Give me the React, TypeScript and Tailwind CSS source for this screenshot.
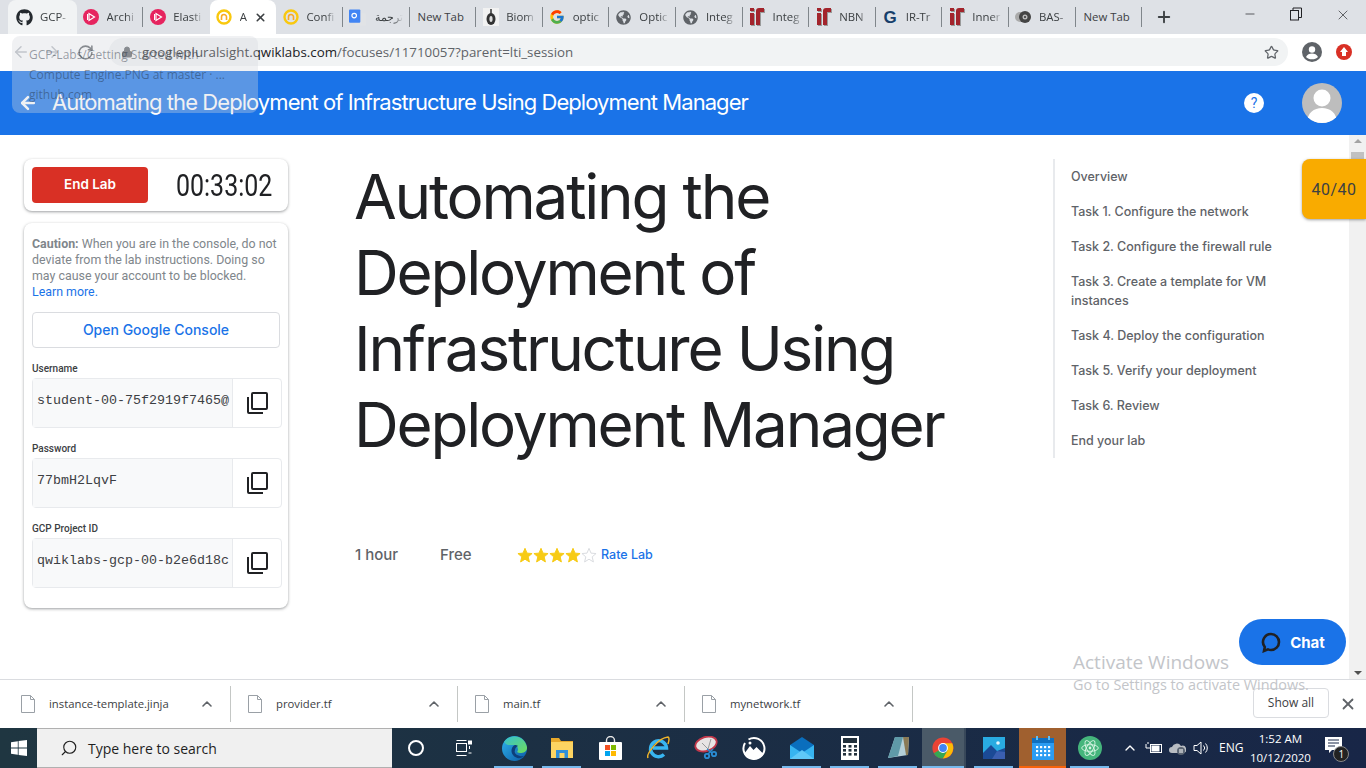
import React from "react";
import { FaGithub, FaGlobeAmericas } from "react-icons/fa";
import { FcGoogle } from "react-icons/fc";
import { ArrowLeft, ArrowRight, RotateCw, Lock, Star, X, Plus, Minus, ChevronUp, Search } from "lucide-react";

const Play = () => (
  <svg width="16" height="16" viewBox="0 0 16 16"><circle cx="8" cy="8" r="8" fill="#e6245f" /><path d="M6 4.5v7l5.5-3.5z" fill="none" stroke="#fff" strokeWidth="1.2" /><path d="M4.5 5v6" stroke="#fff" strokeWidth="1" /></svg>
);
const Qwik = () => (
  <svg width="16" height="16" viewBox="0 0 16 16"><circle cx="8" cy="8" r="6.5" fill="none" stroke="#f9c80e" strokeWidth="2.4" /><path d="M5.5 11V8a2.5 2.5 0 0 1 5 0v3" fill="none" stroke="#f9a825" strokeWidth="1.6" /></svg>
);
const Translate = () => (
  <svg width="18" height="17" viewBox="0 0 18 17"><rect x="6" y="4" width="12" height="13" rx="1" fill="#e1e3e6" /><rect x="0" y="0" width="12" height="14" rx="1" fill="#4285f4" /><circle cx="5.5" cy="6.5" r="2.4" fill="none" stroke="#fff" strokeWidth="1.2" /></svg>
);
const Iron = () => (
  <svg width="16" height="18" viewBox="0 0 16 18"><path d="M2 6h4v12H2zM2 1h4v3H2zM8 18V4a3 3 0 0 1 3-3h5v4h-4v13z" fill="#9a9a9a" /><path d="M1 5h4v12H1zM1 0h4v3H1zM7 17V3a3 3 0 0 1 3-3h5v4h-4v13z" fill="#a3242c" /></svg>
);
const Biom = () => (
  <svg width="16" height="18" viewBox="0 0 16 18"><rect width="16" height="18" fill="#f2f2f2" /><ellipse cx="8" cy="11" rx="4.5" ry="6" fill="#333" /><ellipse cx="8" cy="11" rx="1.6" ry="3" fill="#ddd" /><path d="M8 1v6" stroke="#333" strokeWidth="1.5" /></svg>
);
const Bas = () => (
  <svg width="16" height="12" viewBox="0 0 16 12"><circle cx="5" cy="6" r="5" fill="#aaa" /><circle cx="10" cy="6" r="6" fill="#444" /><circle cx="10" cy="6" r="2.5" fill="#bbb" /><circle cx="10" cy="6" r="1" fill="#333" /></svg>
);
const GTile = () => <span className="text-[17px] font-bold text-[#173f6b] leading-none" style={{ fontFamily: "Liberation Sans" }}>G</span>;
const GH = () => <FaGithub size={17} color="#24292e" />;
const Globe = () => <FaGlobeAmericas size={15} color="#5f6368" />;

const tabs: { icon?: React.ReactNode; label: string; active?: boolean; hover?: boolean; sep?: boolean; ar?: boolean }[] = [
  { icon: <GH />, label: "GCP-", hover: true },
  { icon: <Play />, label: "Archi", sep: true },
  { icon: <Play />, label: "Elasti" },
  { icon: <Qwik />, label: "A", active: true },
  { icon: <Qwik />, label: "Confi", sep: true },
  { icon: <Translate />, label: "ترجمة", sep: true, ar: true },
  { label: "New Tab", sep: true },
  { icon: <Biom />, label: "Biom", sep: true },
  { icon: <FcGoogle size={16} />, label: "optic", sep: true },
  { icon: <Globe />, label: "Optic", sep: true },
  { icon: <Globe />, label: "Integ", sep: true },
  { icon: <Iron />, label: "Integ", sep: true },
  { icon: <Iron />, label: "NBN", sep: true },
  { icon: <GTile />, label: "IR-Tr", sep: true },
  { icon: <Iron />, label: "Inner", sep: true },
  { icon: <Bas />, label: "BAS-", sep: true },
  { label: "New Tab", sep: true },
];

function Tab({ t }: { t: (typeof tabs)[number] }) {
  return (
    <div className={`relative h-[34px] flex items-center shrink-0 gap-[7px] rounded-t-lg ${t.hover ? "w-[68.6px] -ml-[2px] pl-[8px] bg-[#f1f3f4]" : t.active ? "w-[66.6px] pl-[6px] bg-white" : t.icon ? "w-[66.6px] pl-[6px]" : "w-[66.6px] pl-[8px]"}`}>
      {t.icon && <span className="w-[17px] shrink-0 flex items-center justify-center">{t.icon}</span>}
      <span className={`overflow-hidden whitespace-nowrap text-[11.4px] text-[#3c4043] ${t.icon ? "w-[30px] [mask-image:linear-gradient(to_right,black_65%,transparent)]" : ""}`} dir={t.ar ? "rtl" : undefined}>{t.label}</span>
      {t.active && <X size={13} strokeWidth={3} className="absolute right-[9px] text-[#3c4043]" />}
      {t.sep && <span className="absolute right-0 top-[7px] h-[20px] w-px bg-[#80868b]" />}
    </div>
  );
}

function CredRow({ label, value }: { label: string; value: string }) {
  return (
    <div className="flex flex-col">
      <div className="h-[20px] text-[10px] font-medium text-[#3c4043] leading-[14px] pt-[4px]" style={{ fontFamily: "Roboto" }}>{label}</div>
      <div className="flex h-[50px] w-[250px] rounded border border-[#e8eaed]">
        <div className="w-[199px] bg-[#f8f9fa] pl-[4px] pt-[14px] text-[13.33px] leading-[16px] text-[#3c4043] whitespace-nowrap overflow-hidden" style={{ fontFamily: "Liberation Mono" }}>{value}</div>
        <div className="flex-1 border-l border-[#e8eaed] flex items-center justify-center">
          <svg width="24" height="24" viewBox="0 0 24 24" fill="none" stroke="#202124" strokeWidth="2"><rect x="7" y="2" width="15" height="16" rx="1" /><path d="M3 6v15a1 1 0 0 0 1 1h14" /></svg>
        </div>
      </div>
    </div>
  );
}

const nav = ["Overview", "Task 1. Configure the network", "Task 2. Configure the firewall rule", "Task 3. Create a template for VM instances", "Task 4. Deploy the configuration", "Task 5. Verify your deployment", "Task 6. Review", "End your lab"];

const StarIcon = ({ filled }: { filled: boolean }) => (
  <svg width="16" height="16" viewBox="0 0 24 24"><path d="M12 2l3 7.2 7.6.6-5.8 5 1.8 7.6L12 18.3 5.4 22.4l1.8-7.6-5.8-5L9 9.2z" fill={filled ? "#f7cb15" : "#fff"} stroke={filled ? "#f7cb15" : "#dadce0"} strokeWidth="1.5" /></svg>
);

const FileIcon = () => (
  <svg width="14" height="18" viewBox="0 0 14 18" fill="none" stroke="#9aa0a6"><path d="M.5.5h9l4 4v13H.5z" fill="#fff" /><path d="M9.5.5v4h4" /></svg>
);

function Dl({ name, w, pl }: { name: string; w: string; pl: string }) {
  return (
    <div className={`flex items-center h-[36px] border-r border-[#c4c7c5] pr-[15px] ${w} ${pl}`}>
      <FileIcon />
      <span className="ml-[14px] flex-1 text-[11.3px] text-[#3c4043] mt-[1px]">{name}</span>
      <ChevronUp size={16} strokeWidth={2.4} className="text-[#5f6368]" />
    </div>
  );
}

const T = ({ children, line }: { children: React.ReactNode; line?: boolean }) => (
  <div className="relative w-[48px] h-[40px] flex items-center justify-center shrink-0">
    {children}
    {line && <span className="absolute bottom-0 left-[4px] right-[5px] h-[2px] bg-[#76b9ed]" />}
  </div>
);

const Edge = () => (
  <svg width="25" height="25" viewBox="0 0 25 25"><defs><linearGradient id="e1" x1="0" y1="0" x2="1" y2="1"><stop offset="0" stopColor="#2fb5ee" /><stop offset="1" stopColor="#0c59a4" /></linearGradient><linearGradient id="e2" x1="0" y1="0" x2="1" y2="1"><stop offset="0" stopColor="#35c1d1" /><stop offset="1" stopColor="#6fdc5a" /></linearGradient></defs><circle cx="12.5" cy="12.5" r="12.5" fill="url(#e1)" /><path d="M2 6C7-2 22-2 25 11c.5 4-3 6-7 6-1 0-2-.3-3-1 2-2 1-7-4-7-4 0-6 1-9-3z" fill="url(#e2)" /><path d="M13 9c-3 1-5 6-2 10 3 4 8 4 11 1-3 1-11-1-9-6 .3-1.500 1-3.500 3-4-1-1-2-1-3-1z" fill="#0e3f7a" /></svg>
);
const Folder = () => (
  <svg width="22" height="22" viewBox="0 0 22 22"><path d="M0 1h8l2 3h12v5H0z" fill="#e8a92b" /><rect x="0" y="5" width="22" height="16" fill="#fcd462" /><rect x="5" y="13" width="12" height="8" fill="#2f8fd8" /><rect x="8.500" y="16" width="5" height="5" fill="#fcd462" /></svg>
);
const Store = () => (
  <svg width="23" height="24" viewBox="0 0 23 24"><path d="M7.500 8V4.500a4 4 0 0 1 8 0V8" fill="none" stroke="#e8e8e8" strokeWidth="1.4" /><rect x="0" y="6" width="23" height="18" rx="1" fill="#fff" /><rect x="6" y="9" width="5" height="5" fill="#f25022" /><rect x="12" y="9" width="5" height="5" fill="#7fba00" /><rect x="6" y="15" width="5" height="5" fill="#00a4ef" /><rect x="12" y="15" width="5" height="5" fill="#ffb900" /></svg>
);
const IE = () => (
  <svg width="24" height="24" viewBox="0 0 24 24"><path d="M18 18.500a8 8 0 1 1 2.500-6.500H7" fill="none" stroke="#38b6f1" strokeWidth="3.400" /><path d="M2 22C0 18 12 2 22 1c2 1 1 4 0 7" fill="none" stroke="#f0b429" strokeWidth="1.500" /></svg>
);
const Snip = () => (
  <svg width="24" height="24" viewBox="0 0 24 24"><ellipse cx="12" cy="8" rx="11" ry="7" fill="#e8e4e4" stroke="#c0374a" strokeWidth="1.800" transform="rotate(-18 12 8)" /><path d="M8 7l6 6M17 3l-3 10" stroke="#999" /><circle cx="13" cy="20" r="2.200" fill="none" stroke="#2a8dd4" strokeWidth="1.800" /><circle cx="20" cy="18" r="2.200" fill="none" stroke="#2a8dd4" strokeWidth="1.800" /><path d="M13 13l5 4M19 13l-5 5" stroke="#2a8dd4" strokeWidth="1.400" /></svg>
);
const Mount = () => (
  <svg width="24" height="24" viewBox="0 0 24 24"><path d="M6.500 3.500A10.500 10.500 0 1 1 3 7" fill="none" stroke="#fff" strokeWidth="2" /><path d="M2 18l6-8 3.500 4 3-3 7 7c-2 3-5 5-9.500 5S4 21 2 18z" fill="#fff" /><circle cx="8" cy="7" r="1.500" fill="#fff" /></svg>
);
const Mail = () => (
  <svg width="24" height="22" viewBox="0 0 24 22"><path d="M12 0L24 8v14H0V8z" fill="#0a6ebd" /><path d="M0 8l12 8 12-8v14H0z" fill="#37b4f0" /><path d="M0 22l12-9 12 9z" fill="#5fc8f7" /></svg>
);
const Calc = () => (
  <svg width="18" height="24" viewBox="0 0 18 24"><rect width="18" height="24" fill="#fff" /><rect x="2" y="2" width="14" height="5" fill="#22303c" />{[9, 13, 17].map((y) => [2, 7.500, 13].map((x) => <rect key={`${x}-${y}`} x={x} y={y} width="3" height="2.600" fill="#22303c" />))}</svg>
);
const Note = () => (
  <svg width="24" height="24" viewBox="0 0 24 24"><path d="M9 1h14l-1 18-20 3z" fill="#b4d0d8" /><path d="M9 1l-7 21 10-2L17 1z" fill="#5f9aa8" /><path d="M17 1h6l-1 18h-2z" fill="#8a7a55" /></svg>
);
const Chrome = () => (
  <svg width="22" height="22" viewBox="0 0 26 26"><circle cx="13" cy="13" r="12.500" fill="#ea4335" /><path d="M13 13L2.200 19.300A12.500 12.500 0 0 0 13 25.500l6-10z" fill="#34a853" /><path d="M13 7.500h10.800A12.500 12.500 0 0 1 13 25.500l5.400-9.500z" fill="#fbbc05" /><circle cx="13" cy="13" r="5.800" fill="#fff" /><circle cx="13" cy="13" r="4.600" fill="#4285f4" /></svg>
);
const Photos = () => (
  <svg width="22" height="22" viewBox="0 0 22 22"><rect width="22" height="22" fill="#29abe2" /><path d="M0 22v-6l8-8 6 6 8-3v11z" fill="#1b4a95" /><path d="M9 22l5-8 8 1v7z" fill="#3a5fb0" /><circle cx="15" cy="6" r="1.800" fill="#e6f6ff" /></svg>
);
const Cal = () => (
  <svg width="22" height="24" viewBox="0 0 22 24"><rect y="2" width="22" height="22" fill="#2b9cf2" /><rect y="2" width="22" height="5" fill="#0e6fc0" /><rect x="4" y="0" width="2" height="4" fill="#5fc0f5" /><rect x="16" y="0" width="2" height="4" fill="#5fc0f5" />{[10, 14, 18].map((y) => [4, 8, 12, 16].map((x) => <rect key={`${x}-${y}`} x={x} y={y} width="2.200" height="2.200" fill="#fff" />))}</svg>
);
const Atom = () => (
  <svg width="24" height="24" viewBox="0 0 26 26"><circle cx="13" cy="13" r="13" fill="#45b57c" /><g fill="none" stroke="#d8f5e4" strokeWidth="1"><ellipse cx="13" cy="13" rx="9" ry="3.600" /><ellipse cx="13" cy="13" rx="9" ry="3.600" transform="rotate(60 13 13)" /><ellipse cx="13" cy="13" rx="9" ry="3.600" transform="rotate(120 13 13)" /></g><circle cx="13" cy="13" r="1.500" fill="#d8f5e4" /></svg>
);

export default function App() {
  return (
    <div className="relative w-[1366px] h-[768px] overflow-hidden flex flex-col bg-white" style={{ fontFamily: "'Open Sans', sans-serif" }}>
      {/* tab strip */}
      <div className="h-[34px] bg-[#dee1e6] flex pl-[10px] shrink-0">
        {tabs.map((t, i) => <Tab key={i} t={t} />)}
        <div className="ml-[13px] h-[34px] flex items-center"><Plus size={18} strokeWidth={2.5} className="text-[#3c4043]" /></div>
        <div className="flex-1 flex justify-end items-start pt-[7px] pr-[15px] gap-[32px] text-[#202124]">
          <Minus size={14} strokeWidth={1.2} />
          <svg width="14" height="14" viewBox="0 0 14 14" fill="none" stroke="#202124"><rect x="1.500" y="3.500" width="8" height="9.500" /><path d="M4 3.500V1h8.500v9.500h-3" /></svg>
          <X size={16} strokeWidth={1} />
        </div>
      </div>
      {/* toolbar */}
      <div className="h-[37px] bg-white flex items-start pt-[4px] shrink-0">
        <div className="w-[109px] h-[28px] flex items-center pl-[12px] gap-[13px] text-[#b8bcc2]">
          <ArrowLeft size={18} />
          <ArrowRight size={18} />
          <RotateCw size={17} className="ml-[3px] text-[#5f6368]" strokeWidth={2.2} />
        </div>
        <div className="w-[1179px] h-[28px] bg-[#f1f3f4] rounded-full flex items-center pl-[12px]">
          <Lock size={12} className="text-[#5f6368]" fill="#5f6368" />
          <span className="ml-[9px] mt-[1px] text-[13.33px] text-[#5f6368]"><span className="text-[#202124]">googlepluralsight.qwiklabs.com</span>/focuses/11710057?parent=lti_session</span>
          <Star size={15} className="ml-auto mr-[9px] text-[#5f6368]" />
        </div>
        <div className="flex-1 flex items-center h-[28px] pl-[14px] gap-[14px]">
          <svg width="20" height="20" viewBox="0 0 20 20"><circle cx="10" cy="10" r="10" fill="#5f6368" /><circle cx="10" cy="7.500" r="3.200" fill="#fff" /><path d="M4 15c1-2.500 3.500-3.500 6-3.500s5 1 6 3.500c-1.500 1.500-3.500 2.300-6 2.300S5.500 16.500 4 15z" fill="#fff" /></svg>
          <span className="w-[16px] h-[16px] rounded-full bg-[#d93025] flex items-center justify-center"><svg width="10" height="10" viewBox="0 0 10 10" fill="#fff"><path d="M5 0l4 5H7v4H3V5H1z" /></svg></span>
        </div>
      </div>
      {/* blue bar */}
      <div className="h-[64px] bg-[#1a73e8] flex items-center shrink-0 pl-[18px]">
        <ArrowLeft size={20} strokeWidth={3} className="text-white" />
        <h1 className="ml-[14px] -mt-[1px] text-[22px] font-normal text-white tracking-[-0.94px]" style={{ fontFamily: "Inter" }}>Automating the Deployment of Infrastructure Using Deployment Manager</h1>
        <span className="ml-auto w-[20px] h-[20px] rounded-full bg-white text-[#1a73e8] text-[14px] flex items-center justify-center" style={{ fontFamily: "Roboto" }}>?</span>
        <span className="ml-[38px] mr-[24px] w-[40px] h-[40px] rounded-full bg-[#bdbdbd] overflow-hidden flex justify-center">
          <svg width="40" height="40" viewBox="0 0 40 40" fill="#fff"><circle cx="20" cy="15" r="8.500" /><path d="M5 40c0-10 7-15 15-15s15 5 15 15z" /></svg>
        </span>
      </div>
      {/* main */}
      <div className="relative flex-1 flex min-h-0 border-b border-[#dadce0]">
        <div className="flex-1 flex pt-[24px] pl-[24px]">
          <aside className="w-[264px] shrink-0 flex flex-col gap-[12px]">
            <div className="h-[52px] rounded-lg bg-white shadow-[0_1px_3px_rgba(60,64,67,.5)] flex items-center pl-[8px]">
              <div className="w-[116px] h-[36px] shrink-0 pb-[2px] rounded bg-[#d93025] flex items-center justify-center text-[13.5px] font-semibold text-white" style={{ fontFamily: "Inter" }}>End Lab</div>
              <span className="ml-[28px] text-[32px] leading-none text-[#202124] origin-left scale-x-[0.78] whitespace-nowrap" style={{ fontFamily: "Roboto" }}>00:33:02</span>
            </div>
            <div className="h-[385px] rounded-lg bg-white shadow-[0_1px_3px_rgba(60,64,67,.5)] px-[8px] pt-[13px]">
              <p className="text-[12.4px] leading-[16px] text-[#80868b]" style={{ fontFamily: "Roboto" }}><b className="font-bold">Caution:</b> When you are in the console, do not deviate from the lab instructions. Doing so may cause your account to be blocked. <span className="block text-[#1a73e8]">Learn more.</span></p>
              <div className="mt-[12px] h-[36px] w-[248px] pb-[2px] rounded border border-[#dadce0] flex items-center justify-center text-[14px] font-medium text-[#1a73e8]" style={{ fontFamily: "Inter" }}>Open Google Console</div>
              <div className="mt-[10px] flex flex-col gap-[10px]">
                <CredRow label="Username" value="student-00-75f2919f7465@" />
                <CredRow label="Password" value="77bmH2LqvF" />
                <CredRow label="GCP Project ID" value="qwiklabs-gcp-00-b2e6d18c" />
              </div>
            </div>
          </aside>
          <main className="ml-[66px] w-[680px] flex flex-col">
            <h2 className="text-[62px] leading-[76px] font-normal text-[#202124] tracking-[-2.2px]" style={{ fontFamily: "Inter" }}>Automating the Deployment of Infrastructure Using Deployment Manager</h2>
            <div className="mt-[81px] ml-[1px] flex items-center text-[15px] text-[#5f6368] font-medium" style={{ fontFamily: "Inter" }}>
              <span className="w-[85px]">1 hour</span>
              <span className="w-[77px]">Free</span>
              <span className="flex w-[84px]">{[1, 2, 3, 4, 5].map((n) => <StarIcon key={n} filled={n < 5} />)}</span>
              <span className="text-[12.5px] mt-[1px] text-[#1a73e8] font-medium">Rate Lab</span>
            </div>
          </main>
          <nav className="ml-[19px] h-[299px] w-[232px] border-l-2 border-[#e8eaed] pl-[16px] pt-[8px] flex flex-col gap-[16px] text-[12.5px] leading-[19px] font-medium text-[#5f6368]" style={{ fontFamily: "Inter" }}>
            {nav.map((n) => <div key={n}>{n}</div>)}
          </nav>
        </div>
        <div className="w-[17px] bg-[#f1f1f1] shrink-0 flex flex-col items-center justify-between pt-[4px] pb-[4px] relative">
          <span className="w-0 h-0 border-x-[4px] border-x-transparent border-b-[4px] border-b-[#a3a3a3]" />
          <span className="absolute top-[17px] left-[2px] w-[13px] h-[40px] bg-[#c1c1c1]" />
          <span className="w-0 h-0 border-x-[4px] border-x-transparent border-t-[4px] border-t-[#505050]" />
        </div>
        {/* overlays */}
        <div className="absolute right-0 top-[24px] w-[64px] h-[60px] pt-[1px] bg-[#f9ab00] rounded-l-lg shadow-[0_1px_3px_rgba(60,64,67,.5)] flex items-center justify-center text-[16px] text-[#3c4043] tracking-[0.5px]" style={{ fontFamily: "Roboto" }}>40/40</div>
        <div className="absolute left-[1239px] top-[484px] w-[107px] h-[46px] rounded-full bg-[#1a73e8] flex items-center justify-center gap-[8px] text-white text-[15px] font-bold" style={{ fontFamily: "Inter" }}>
          <svg width="22" height="22" viewBox="0 0 22 22" fill="none" stroke="#202124" strokeWidth="2.600"><path d="M11 3a8 8 0 0 1 0 16c-1.500 0-2-.2-3-.6L4 20l.8-4A8 8 0 0 1 11 3z" /></svg>
          <span className="mt-[2px]">Chat</span>
        </div>
        <div className="absolute left-[1073px] top-[515px] text-[19px] leading-[24px] text-[#c3c5c9]" style={{ fontFamily: "Open Sans" }}>Activate Windows</div>
        <div className="absolute left-[1073px] top-[541px] text-[14.4px] leading-[18px] text-[#c3c5c9] z-10" style={{ fontFamily: "Open Sans" }}>Go to Settings to activate Windows.</div>
      </div>
      {/* shelf */}
      <div className="h-[48px] bg-white flex items-center shrink-0">
        <Dl name="instance-template.jinja" w="w-[231px]" pl="pl-[21px]" />
        <Dl name="provider.tf" w="w-[227px]" pl="pl-[17px]" />
        <Dl name="main.tf" w="w-[227px]" pl="pl-[17px]" />
        <Dl name="mynetwork.tf" w="w-[228px]" pl="pl-[17px]" />
        <div className="ml-auto w-[76px] h-[30px] rounded border border-[#dadce0] flex items-center justify-center text-[12px] text-[#3c4043] font-medium mt-[-2px]">Show all</div>
        <X size={18} strokeWidth={2.4} className="ml-[10px] mr-[9px] text-[#5f6368]" />
      </div>
      {/* taskbar */}
      <div className="h-[40px] flex items-center shrink-0 bg-gradient-to-r from-[#1f3641] to-[#182647] text-white">
        <div className="w-[37px] flex justify-center">
          <svg width="16" height="16" viewBox="0 0 16 16" fill="#fff"><path d="M0 2.200l6.800-1v6.400H0zM7.600 1.100L16 0v7.600H7.600zM0 8.400h6.800v6.400L0 13.800zM7.600 8.400H16V16l-8.400-1.100z" /></svg>
        </div>
        <div className="w-[355px] h-[40px] bg-[#f0f0f0] border-y border-[#b0b0b0] flex items-center pl-[23px] text-[#1f1f1f]">
          <Search size={18} strokeWidth={1.5} className="-scale-x-100" />
          <span className="ml-[10px] text-[14px]">Type here to search</span>
        </div>
        <div className="flex items-center w-[627px] shrink-0">
          <T><span className="w-[16px] h-[16px] rounded-full border-[2.5px] border-white" /></T>
          <div className="w-[47px] h-[40px] flex items-center justify-center">
            <svg width="16" height="16" viewBox="0 0 16 16" fill="none" stroke="#fff"><rect x=".5" y="3.500" width="10" height="8" /><path d="M.5 .5h10M.5 15.500h10" /><rect x="12.500" y="1" width="3" height="3" fill="#fff" /><path d="M13.500 6v3M12.500 13h3" /></svg>
          </div>
          <div className="w-[3px]" />
          <T line><Edge /></T><T line><Folder /></T><T><Store /></T><T><IE /></T><T><Snip /></T><T><Mount /></T><T line><Mail /></T><T line><Calc /></T><T line><Note /></T>
          <div className="relative w-[44px] h-[40px] bg-[#4a5a68] border-r-2 border-[#38485a] flex items-center justify-center shrink-0"><Chrome /><span className="absolute bottom-0 left-0 right-0 h-[2px] bg-[#76b9ed]" /></div>
          <div className="w-[4px]" />
          <T line><Photos /></T>
        </div>
        <div className="relative w-[47px] h-[40px] bg-[#a0602f] flex items-center justify-center shrink-0"><Cal /><span className="absolute bottom-0 inset-x-0 h-[2px] bg-[#f7630c]" /></div>
        <T line><Atom /></T>
        <div className="flex items-center text-white ml-[8px] gap-[7px]">
          <ChevronUp size={16} />
          <svg width="17" height="14" viewBox="0 0 17 14" fill="none" stroke="#fff"><rect x="5.500" y="3.500" width="11" height="8" /><path d="M1 3v4h4M3 1v2" /><rect x="7" y="5" width="7" height="5" fill="#fff" /></svg>
          <svg width="17" height="14" viewBox="0 0 17 14"><path d="M3 12a3 3 0 0 1 0-6 5 5 0 0 1 9-1 3.500 3.500 0 0 1 3 7z" fill="#b8bcc2" /><circle cx="12" cy="10" r="4" fill="#5a6472" /><path d="M11 8v4M13 8v4" stroke="#fff" /></svg>
          <svg width="17" height="16" viewBox="0 0 17 16" fill="none" stroke="#fff" strokeWidth="1"><path d="M1 5.500h3L8 2v12l-4-3.500H1z" /><path d="M10.500 5.500a3.500 3.500 0 0 1 0 5M12.500 3.500a6.500 6.500 0 0 1 0 9" /></svg>
          <span className="text-[12px] ml-[2px]">ENG</span>
        </div>
        <div className="ml-[1px] w-[72px] text-center text-[11.5px] leading-[19px]"><div>1:52 AM</div><div>10/12/2020</div></div>
        <div className="relative ml-[9px] w-[22px] h-[22px]">
          <svg width="18" height="18" viewBox="0 0 18 18" fill="#fff"><path d="M0 0h17v13H7l-3 3v-3H0z" /><path d="M3 3h11M3 6h11M3 9h7" stroke="#182647" /></svg>
          <span className="absolute -right-[2px] -bottom-[3px] w-[16px] h-[16px] rounded-full bg-[#222] border border-[#888] text-[10px] flex items-center justify-center">1</span>
        </div>
      </div>
      {/* link preview, semi-transparent over the page */}
      <div className="absolute left-[12px] top-[36px] w-[246px] h-[77px] rounded-lg bg-[#d3d7de]/35 pl-[17px] pt-[9px] text-[12px] leading-[20px] text-[#1f2d3d]/45" style={{ fontFamily: "Open Sans" }}>
        <div>GCP-Labs/Getting Started with</div>
        <div>Compute Engine.PNG at master · ...</div>
        <div>github.com</div>
      </div>
    </div>
  );
}
